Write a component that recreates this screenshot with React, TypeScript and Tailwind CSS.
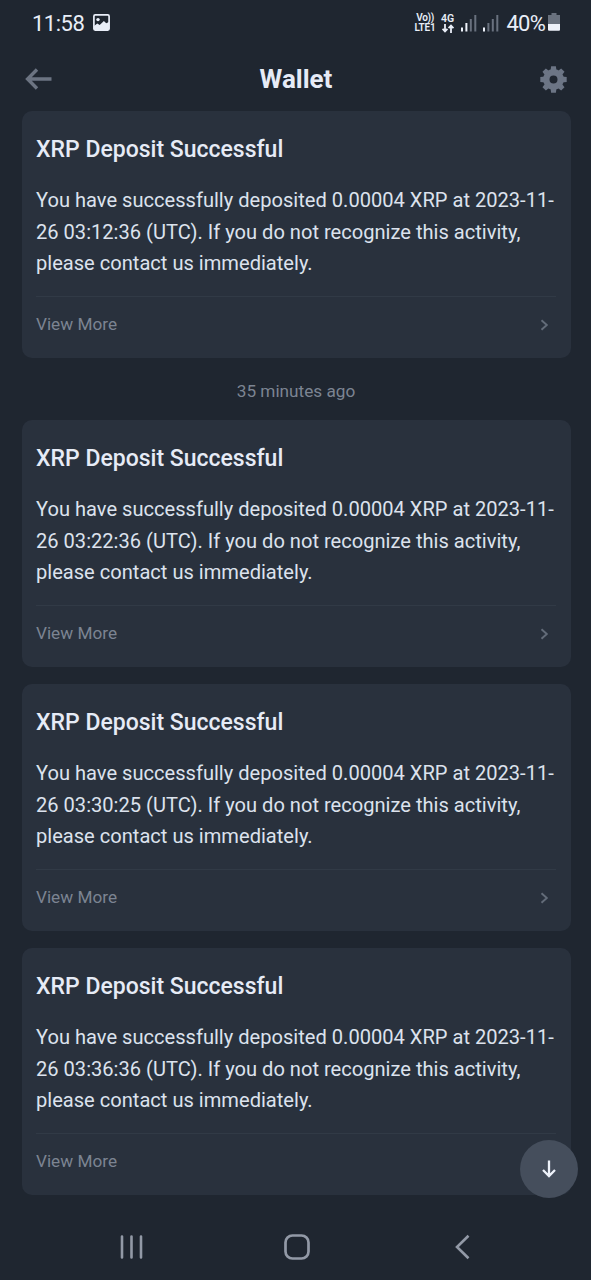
const notifications = [
  { id: 1, time: '03:12:36', age: '35 minutes ago' },
  { id: 2, time: '03:22:36' },
  { id: 3, time: '03:30:25' },
  { id: 4, time: '03:36:36' },
];

const teeth = [0, 45, 90, 135, 180, 225, 270, 315];

function PictureIcon() {
  return (
    <svg width="17" height="17" viewBox="0 0 17 17" className="mb-[2px] ml-[9px]" fill="none">
      <rect x="0.9" y="0.9" width="15.2" height="15.2" rx="1.3" stroke="#e9eef8" strokeWidth="1.7" />
      <circle cx="5" cy="5.6" r="1.7" fill="#e9eef8" />
      <path d="M1 16V12l3.3-2.6 2.4 1.5 4.2-4 2.3 2.3L16 8v8z" fill="#e9eef8" />
    </svg>
  );
}

function Signal({ active }: { active: number }) {
  return (
    <svg width="17" height="18" viewBox="0 0 17 18">
      <rect x="0" y="13.5" width="2" height="4" fill="#eef2fa" />
      <rect x="4.4" y="9" width="2" height="8.5" fill={active > 1 ? '#eef2fa' : '#69717e'} />
      <rect x="8.8" y="5" width="2" height="12.5" fill="#69717e" />
      <rect x="13.3" y="1" width="2" height="16.5" fill="#69717e" />
    </svg>
  );
}

function StatusBar() {
  return (
    <div className="flex h-[46px] items-center pl-8 pr-[31px] text-[#e9eef8]">
      <span className="mt-[2px] text-[22px] leading-none tracking-[-0.5px]">11:58</span>
      <PictureIcon />
      <div className="ml-auto flex items-center">
        <div className="flex w-[22px] flex-col items-center text-[10px] font-semibold leading-[10px] whitespace-nowrap">
          <span className="tracking-[-0.3px]">Vo))</span>
          <span className="tracking-[-0.1px]">LTE1</span>
        </div>
        <div className="ml-1 flex w-[15px] flex-col items-center text-[10.5px] font-semibold leading-[10px]">
          <span>4G</span>
          <svg width="12" height="9" viewBox="0 0 12 9" fill="none" stroke="#e9eef8" strokeWidth="1.8">
            <path d="M3 0v7M.6 4.8 3 7.5l2.4-2.7M9 9V2M6.6 4.2 9 1.5l2.4 2.7" />
          </svg>
        </div>
        <div className="ml-[6px] flex gap-[4.5px]">
          <Signal active={2} />
          <Signal active={1} />
        </div>
        <span className="mt-[2px] ml-[7px] text-[22px] leading-none tracking-[-0.8px]">40%</span>
        <svg width="12" height="18" viewBox="0 0 12 18" className="mb-[2px] ml-[3px]">
          <path d="M3.5 0h5v2H12v9H0V2h3.5z" fill="#69717e" />
          <path d="M0 11h12v5.8q0 1-1 1H1q-1 0-1-1z" fill="#eef2fa" />
        </svg>
      </div>
    </div>
  );
}

function Header() {
  return (
    <header className="flex h-[65px] items-center justify-between pr-[24px] pl-[25px]">
      <svg width="27" height="22" viewBox="0 0 27 22" className="mt-[1px]" fill="none" stroke="#6c7482" strokeWidth="3.4">
        <path d="M26.5 11H3M12 1.5 2.6 11l9.4 9.5" />
      </svg>
      <h1 className="mt-[2px] text-[26px] font-bold text-[#e6ebf6]">Wallet</h1>
      <svg width="27" height="27" viewBox="-13.5 -13.5 27 27" className="mt-[1px]" fill="#6c7585">
        {teeth.map((angle) => (
          <path key={angle} d="M-3.1-8-2.4-13.2H2.4L3.1-8z" transform={`rotate(${angle})`} />
        ))}
        <circle r="7.2" fill="none" stroke="#6c7585" strokeWidth="6.4" />
      </svg>
    </header>
  );
}

function DepositCard({ time }: { time: string }) {
  const message = `You have successfully deposited 0.00004 XRP at 2023-11-26 ${time} (UTC). If you do not recognize this activity, please contact us immediately.`;

  return (
    <article className="h-[246.6px] rounded-[10px] bg-[#29313d] px-[14.5px] pt-[23px]">
      <h2 className="text-[23px] font-medium leading-8 text-[#e6ebf6]">XRP Deposit Successful</h2>
      <p className="mt-[19px] w-[523px] text-[20.1px] leading-[31.7px] text-[#dce2ed]">{message}</p>
      <div className="mt-[15.5px] flex h-[57px] items-center justify-between border-t border-[#313a46] pr-[7px]">
        <span className="text-[17.2px] text-[#7c8492]">View More</span>
        <svg width="9" height="12" viewBox="0 0 9 12" fill="none" stroke="#636c79" strokeWidth="1.9">
          <path d="m1.5 1.2 5.3 4.8-5.3 4.8" />
        </svg>
      </div>
    </article>
  );
}

function NavBar() {
  return (
    <nav className="fixed inset-x-0 bottom-0 flex h-[67px] items-center bg-[#1f2630] pl-[120px]">
      <svg width="24" height="26" viewBox="0 0 24 26" stroke="#9299a6" strokeWidth="2.6" strokeLinecap="round">
        <path d="M2 2.5v21M11.5 2.5v21M21 2.5v21" />
      </svg>
      <svg width="26" height="26" viewBox="0 0 26 26" className="ml-[140px]" fill="none" stroke="#9299a6" strokeWidth="2.7">
        <rect x="1.5" y="1.5" width="23" height="23" rx="7" />
      </svg>
      <svg width="16" height="26" viewBox="0 0 16 26" className="ml-[144px]" fill="none" stroke="#9299a6" strokeWidth="2.6">
        <path d="M14.5 1.7 3 13l11.5 11.3" />
      </svg>
    </nav>
  );
}

export default function App() {
  return (
    <div className="relative h-[1280px] w-full overflow-hidden bg-[#1f2630] font-[Roboto,sans-serif]">
      <StatusBar />
      <Header />
      <main className="flex flex-col gap-[17.4px] pr-[20.5px] pl-[21.5px]">
        {notifications.map((item) => (
          <div key={item.id}>
            <DepositCard time={item.time} />
            {item.age && (
              <div className="flex h-[45px] items-end justify-center text-[17.2px] leading-6 text-[#7c8492]">
                {item.age}
              </div>
            )}
          </div>
        ))}
      </main>
      <button
        aria-label="Scroll down"
        className="absolute top-[1140px] left-[520px] flex size-[58px] items-center justify-center rounded-full bg-[#454e5c]"
      >
        <svg width="16" height="20" viewBox="0 0 16 20" fill="none" stroke="#eef2fa" strokeWidth="2.3">
          <path d="M8 1.5v15.5M2 11l6 6 6-6" />
        </svg>
      </button>
      <NavBar />
    </div>
  );
}
